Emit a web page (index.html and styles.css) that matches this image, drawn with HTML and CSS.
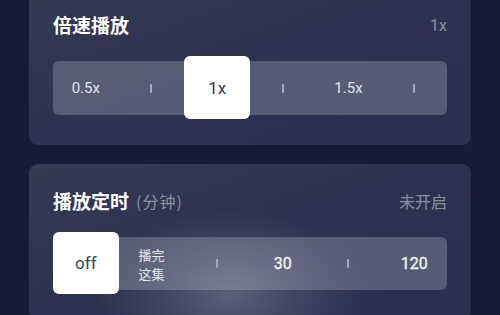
FILE: index.html
```html
<!DOCTYPE html>
<html lang="zh">
<head>
<meta charset="utf-8">
<link rel="stylesheet" href="styles.css">
</head>
<body>
<div class="page">
  <section class="card card-speed">
    <div class="head">
      <h2 class="title">倍速播放</h2>
      <span class="value">1x</span>
    </div>
    <div class="track">
      <div class="slot">0.5x</div>
      <div class="slot"><i class="tick"></i></div>
      <div class="slot selected">1x</div>
      <div class="slot"><i class="tick"></i></div>
      <div class="slot">1.5x</div>
      <div class="slot"><i class="tick"></i></div>
    </div>
  </section>
  <section class="card card-timer">
    <div class="head">
      <h2 class="title">播放定时<span class="unit">(分钟)</span></h2>
      <span class="value">未开启</span>
    </div>
    <div class="track">
      <div class="slot selected off">off</div>
      <div class="slot small">播完<br>这集</div>
      <div class="slot"><i class="tick"></i></div>
      <div class="slot num">30</div>
      <div class="slot"><i class="tick"></i></div>
      <div class="slot num">120</div>
    </div>
  </section>
</div>
</body>
</html>
```

FILE: styles.css
```css
* { box-sizing: border-box; }
html, body {
  margin: 0;
  padding: 0;
  width: 500px;
  height: 315px;
  overflow: hidden;
  background: #161c37;
  font-family: Roboto, "Noto Sans CJK SC", sans-serif;
}
.page {
  padding: 0 29px;
  margin-top: -12px;
  display: flex;
  flex-direction: column;
  gap: 19px;
}
.card {
  position: relative;
  border-radius: 9px;
  padding: 25px 24px 30px;
  background: linear-gradient(160deg, #363a53 0%, #2d3250 45%, #293050 100%);
  overflow: hidden;
}
.card-timer::after {
  content: "";
  position: absolute;
  left: 66px;
  top: 45px;
  width: 270px;
  height: 170px;
  background: radial-gradient(ellipse at center, rgba(215,215,230,0.28) 0%, rgba(215,215,230,0.12) 35%, rgba(215,215,230,0) 70%);
  pointer-events: none;
}
.head {
  position: relative;
  height: 24px;
  display: flex;
  align-items: center;
  justify-content: space-between;
}
.title {
  margin: 0;
  font-family: "Noto Sans CJK SC", sans-serif;
  font-size: 19px;
  font-weight: 700;
  color: #ffffff;
  line-height: 24px;
  display: flex;
  align-items: center;
}
.unit {
  font-size: 16px;
  font-weight: 400;
  color: #8d91a3;
  margin-left: 7px;
  letter-spacing: 1px;
}
.value {
  font-size: 16px;
  color: #8b8fa0;
}
.card-timer .value {
  font-family: "Noto Sans CJK SC", sans-serif;
  font-size: 16px;
}
.track {
  position: relative;
  margin-top: 24px;
  height: 54px;
  border-radius: 6px;
  background: rgba(140, 145, 165, 0.45);
  display: grid;
  grid-template-columns: repeat(6, 1fr);
}
.card-timer .track { height: 53px; }
.slot {
  position: relative;
  z-index: 1;
  display: flex;
  align-items: center;
  justify-content: center;
  color: #e3e5ec;
  font-size: 15px;
}
.slot.num { font-size: 16px; font-weight: 400; color: #f4f5f8; -webkit-text-stroke: 0.3px #f4f5f8; }
.slot.small {
  font-family: "Noto Sans CJK SC", sans-serif;
  font-size: 13px;
  line-height: 19px;
  text-align: left;
}
.tick {
  display: block;
  width: 2px;
  height: 9px;
  background: #a9acb8;
  border-radius: 1px;
}
.slot.selected {
  z-index: 2;
  margin: -5px 0 -4px;
  background: #ffffff;
  border-radius: 6px;
  color: #3a3a3e;
  font-size: 17px;
}
.slot.off { font-size: 17px; font-weight: 400; color: #444448; }
```
